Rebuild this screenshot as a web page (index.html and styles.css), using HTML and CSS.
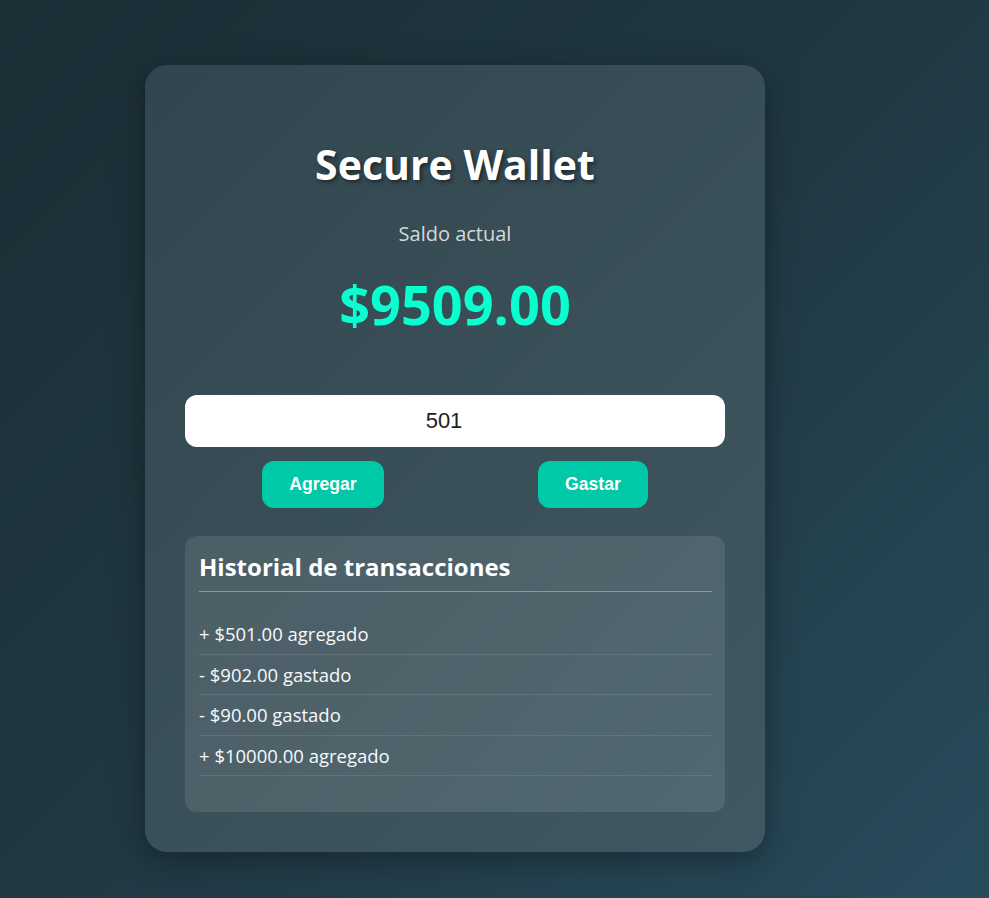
FILE: index.html
```html
<!DOCTYPE html>
<html lang="es">
<head>
<meta charset="utf-8">
<title>Secure Wallet</title>
<link rel="stylesheet" href="styles.css">
</head>
<body>
  <main class="wallet">
    <h1 class="wallet-title">Secure Wallet</h1>
    <p class="balance-label">Saldo actual</p>
    <p class="balance">$9509.00</p>
    <input class="amount" type="number" value="501">
    <div class="actions">
      <button class="btn">Agregar</button>
      <button class="btn">Gastar</button>
    </div>
    <section class="history">
      <h3 class="history-title">Historial de transacciones</h3>
      <ul class="history-list">
        <li>+ $501.00 agregado</li>
        <li>- $902.00 gastado</li>
        <li>- $90.00 gastado</li>
        <li>+ $10000.00 agregado</li>
      </ul>
    </section>
  </main>
</body>
</html>
```

FILE: styles.css
```css
html, body {
  margin: 0;
  min-height: 100%;
}

body {
  min-height: 100vh;
  box-sizing: border-box;
  padding: 65px 0 0 145px;
  background: linear-gradient(135deg, #1b2d35 0%, #203842 50%, #284b5c 100%);
  font-family: "Open Sans", "Noto Sans", sans-serif;
  color: #fff;
}

.wallet {
  width: 540px;
  padding: 40px;
  border-radius: 22px;
  background: linear-gradient(135deg, #32454e 0%, #3a5059 55%, #3f5862 100%);
  box-shadow: 0 8px 32px rgba(0, 0, 0, 0.35);
  display: flex;
  flex-direction: column;
}

.wallet-title {
  margin: 34px 0 0;
  font-size: 41px;
  line-height: 50px;
  font-weight: 700;
  text-align: center;
  text-shadow: 2px 2px 4px rgba(0, 0, 0, 0.5);
}

.balance-label {
  margin: 31px 0 0;
  font-size: 20px;
  line-height: 28px;
  text-align: center;
  color: rgba(255, 255, 255, 0.8);
}

.balance {
  margin: 24px 0 0;
  font-size: 54px;
  line-height: 64px;
  font-weight: 700;
  text-align: center;
  color: #0affd0;
}

.amount {
  margin: 59px 0 0;
  box-sizing: border-box;
  width: 100%;
  height: 52px;
  padding: 0 22px 0 0;
  border: none;
  border-radius: 12px;
  background: #fff;
  font-family: "Liberation Sans", Arial, sans-serif;
  font-size: 22px;
  color: #222;
  text-align: center;
  outline: none;
  -moz-appearance: textfield;
}

.amount::-webkit-outer-spin-button,
.amount::-webkit-inner-spin-button {
  -webkit-appearance: none;
  margin: 0;
}

.actions {
  margin-top: 14px;
  display: flex;
  justify-content: space-around;
}

.btn {
  padding: 13px 27px;
  border: none;
  border-radius: 12px;
  background: #00c9a7;
  color: #fff;
  font-family: "Liberation Sans", Arial, sans-serif;
  font-size: 17.6px;
  line-height: 21px;
  font-weight: 700;
}

.history {
  margin-top: 28px;
  padding: 15px 13px 36px 14px;
  border-radius: 12px;
  background: rgba(255, 255, 255, 0.1);
}

.history-title {
  margin: 0 0 22px;
  padding-bottom: 8px;
  border-bottom: 1px solid rgba(255, 255, 255, 0.35);
  font-size: 24px;
  line-height: 32px;
  font-weight: 700;
}

.history-list {
  margin: 0;
  padding: 0;
  list-style: none;
}

.history-list li {
  padding: 8px 0;
  font-size: 18.5px;
  line-height: 23.5px;
  border-bottom: 1px solid rgba(255, 255, 255, 0.1);
  color: #f7f9fa;
}
```
